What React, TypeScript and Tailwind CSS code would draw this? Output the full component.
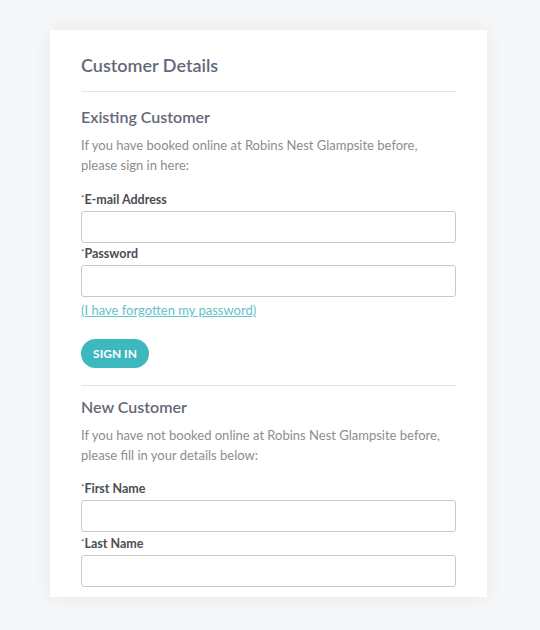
import React from "react";

function Field({ label, type = "text" }: { label: string; type?: string }) {
  return (
    <>
      <label className="block text-[12.5px] leading-[16px] font-bold text-[#4b4d52]">
        <span className="relative -top-[3px] text-[8px] leading-none font-normal">*</span>
        {label}
      </label>
      <input
        type={type}
        className="mt-[3px] block w-full h-[32px] rounded-[3px] border border-[#c9c9c9] bg-white outline-none"
      />
    </>
  );
}

export default function App() {
  return (
    <div
      className="min-h-[630px] bg-[#f6f7f9] pt-[30px] pl-[50px]"
      style={{ fontFamily: "Lato, 'Open Sans', sans-serif" }}
    >
      <div className="w-[437px] h-[567px] overflow-hidden bg-white px-[31px] shadow-[0_0_18px_rgba(0,0,0,0.07)]">
        <h1 className="pt-[23px] text-[18px] leading-[24px] font-semibold text-[#646877]">
          Customer Details
        </h1>
        <div className="mt-[14px] h-px bg-[#e3e3e3]" />

        <h2 className="mt-[14px] text-[16px] leading-[22px] font-semibold text-[#646877]">
          Existing Customer
        </h2>
        <p className="mt-[7px] text-[13px] leading-[20px] text-[#8d8d8d]">
          If you have booked online at Robins Nest Glampsite before,
          <br />
          please sign in here:
        </p>

        <div className="mt-[17px]">
          <Field label="E-mail Address" type="email" />
        </div>
        <div className="mt-[3px]">
          <Field label="Password" type="password" />
        </div>
        <a
          href="#"
          className="mt-[5px] block text-[13px] leading-[16px] text-[#62c3c8] underline"
        >
          (I have forgotten my password)
        </a>
        <button className="mt-[21px] h-[29px] w-[68px] rounded-full bg-[#3db8be] text-[12px] font-bold text-white">
          SIGN IN
        </button>

        <div className="mt-[17px] h-px bg-[#e3e3e3]" />

        <h2 className="mt-[10px] text-[16px] leading-[22px] font-semibold text-[#646877]">
          New Customer
        </h2>
        <p className="mt-[7px] text-[13px] leading-[20px] text-[#8d8d8d]">
          If you have not booked online at Robins Nest Glampsite before,
          <br />
          please fill in your details below:
        </p>

        <div className="mt-[16px]">
          <Field label="First Name" />
        </div>
        <div className="mt-[4px]">
          <Field label="Last Name" />
        </div>
      </div>
    </div>
  );
}
